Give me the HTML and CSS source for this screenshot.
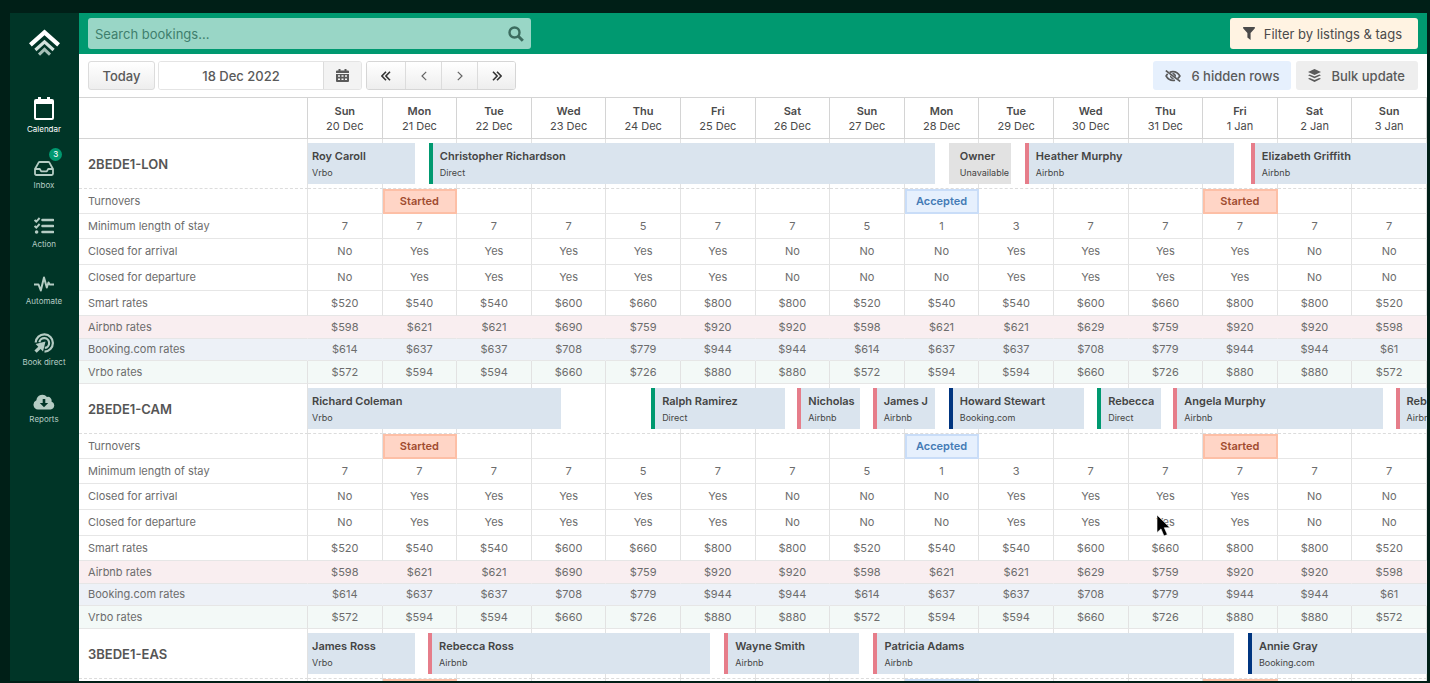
FILE: index.html
```html
<!DOCTYPE html>
<html lang="en">
<head>
    <meta charset="UTF-8">
    <meta name="viewport" content="width=device-width, initial-scale=1.0">
    <title>Calendar</title>
    <link rel="stylesheet" href="styles.css">
</head>
<body>
    <nav class="sidebar">
        <a href="#" class="logo" aria-label="Home">
            <svg width="31" height="27" viewBox="0 0 31 27" fill="none">
                <path d="M1.400 15.800 15.500 3.400l14.100 12.400" stroke="#fff" stroke-width="4.200"/>
                <path d="M6.400 21 15.500 12.800l9.100 8.200" stroke="#d3e2dd" stroke-width="3.200"/>
                <path d="M10 25.600 15.500 20.400l5.500 5.200" stroke="#a5beb6" stroke-width="3"/>
            </svg>
        </a>
        <a href="#" class="nav-item active">
            <svg width="20" height="23" viewBox="0 0 20 23"><path fill="currentColor" fill-rule="evenodd" d="M4 0h3v2h6V0h3v2h2a2 2 0 0 1 2 2v17a2 2 0 0 1-2 2H2a2 2 0 0 1-2-2V4a2 2 0 0 1 2-2h2zM2 7v14h16V7z"/></svg>
            <span>Calendar</span>
        </a>
        <a href="#" class="nav-item">
            <svg width="20" height="15" viewBox="0 0 20 15" fill="none" stroke="currentColor" stroke-width="1.8" stroke-linejoin="round"><path d="M1 8 4.600 1.600Q5 1 5.800 1h8.400q.8 0 1.200.6L19 8v4.600q0 1.400-1.400 1.400H2.400Q1 14 1 12.600z"/><path d="M1 8h4.800l1.400 2.400h5.600L14.200 8H19"/></svg>
            <span>Inbox</span>
            <b class="badge">3</b>
        </a>
        <a href="#" class="nav-item">
            <svg width="20" height="18" viewBox="0 0 20 18" fill="none" stroke="currentColor"><path stroke-width="2.600" stroke-linecap="round" d="M8.500 3H19M8.500 9H19M8.500 15H19"/><path stroke-width="1.900" d="m.6 3 1.700 1.700L5.600 1M.6 9l1.700 1.700L5.600 7"/><circle cx="2.600" cy="15" r="1.800" fill="currentColor" stroke="none"/></svg>
            <span>Action</span>
        </a>
        <a href="#" class="nav-item">
            <svg width="20" height="16" viewBox="0 0 20 16" fill="none" stroke="currentColor" stroke-width="2" stroke-linejoin="round"><path d="M0 8.500h4.500l2.300 6L10 1.500l2.800 10 1.700-5 1.200 2H20"/></svg>
            <span>Automate</span>
        </a>
        <a href="#" class="nav-item">
            <svg width="20" height="20" viewBox="0 0 20 20" fill="none" stroke="currentColor"><path stroke-width="2.200" d="M1.700 9.500A8.600 8.600 0 1 1 10.500 18.600"/><path stroke-width="2.200" d="M5.400 9.200a4.900 4.900 0 1 1 5.400 5.700"/><path fill="currentColor" stroke="none" d="m11.500 8.500-2.500 10-2.400-2.600L2.700 19.800.4 17.500l3.900-3.800L1.600 11z"/></svg>
            <span>Book direct</span>
        </a>
        <a href="#" class="nav-item">
            <svg width="22" height="16" viewBox="0 0 22 16"><path fill="currentColor" fill-rule="evenodd" d="M5 15.500A4.800 4.800 0 0 1 3.400 6.300 6 6 0 0 1 14 3a3.600 3.600 0 0 1 4.500 4.400A4.200 4.200 0 0 1 17.600 15.500zM9.700 5v4H6.800l4.200 4.300L15.200 9h-2.900V5z"/></svg>
            <span>Reports</span>
        </a>
    </nav>

    <main class="content">
        <header class="topbar">
            <form class="search">
                <input type="text" placeholder="Search bookings..." aria-label="Search bookings">
                <button type="button" aria-label="Search">
                    <svg width="16" height="16" viewBox="0 0 16 16" fill="none" stroke="currentColor" stroke-width="2.400"><circle cx="6.500" cy="6.500" r="5"/><path stroke-width="3" d="m10.300 10.300 4.500 4.500"/></svg>
                </button>
            </form>
            <button type="button" class="btn filter-btn">
                <svg width="12" height="13" viewBox="0 0 12 13"><path fill="currentColor" d="M.5 0h11q.8.600.2 1.400L7.600 6v7L4.400 10.400V6L.3 1.400Q-.3.600.5 0z"/></svg>
                Filter by listings &amp; tags
            </button>
        </header>

        <div class="toolbar">
            <button type="button" class="btn today-btn">Today</button>
            <div class="date-group">
                <input type="text" value="18 Dec 2022" aria-label="Date">
                <button type="button" class="grey-btn" aria-label="Open date picker">
                    <svg width="13" height="13" viewBox="0 0 13 13"><path fill="currentColor" fill-rule="evenodd" d="M2.500 0h2v1.500h4V0h2v1.500H12q1 0 1 1V4H0V2.500q0-1 1-1h1.500zM0 5h13v7q0 1-1 1H1q-1 0-1-1zm2 1.200v1.600h2V6.200zm3.500 0v1.600h2V6.200zm3.500 0v1.600h2V6.200zM2 9.500v1.600h2V9.500zm3.500 0v1.600h2V9.500zm3.500 0v1.600h2V9.500z"/></svg>
                </button>
            </div>
            <div class="step-group">
                <button type="button" class="grey-btn strong" aria-label="Back two weeks"><svg width="10" height="10" viewBox="0 0 10 10"><path d="M5 .8.9 5 5 9.200M9 .8 4.900 5 9 9.200"/></svg></button>
                <button type="button" class="grey-btn" aria-label="Back one day"><svg width="6" height="10" viewBox="0 0 6 10"><path d="M5.200.8 1 5l4.200 4.200"/></svg></button>
                <button type="button" class="grey-btn" aria-label="Forward one day"><svg width="6" height="10" viewBox="0 0 6 10"><path d="M.8.8 5 5 .8 9.200"/></svg></button>
                <button type="button" class="grey-btn strong" aria-label="Forward two weeks"><svg width="10" height="10" viewBox="0 0 10 10"><path d="M1 .8 5.100 5 1 9.200M5 .8 9.100 5 5 9.200"/></svg></button>
            </div>
            <button type="button" class="btn hidden-btn">
                <svg width="16" height="12" viewBox="0 0 16 12" fill="none" stroke="currentColor"><path stroke-width="1.600" d="M4.700 2.300A7.500 7.500 0 0 1 8 1.600c3 0 5.400 1.800 6.900 4.400a9 9 0 0 1-2.300 2.700M10 10.200a7 7 0 0 1-2 .2C5 10.400 2.600 8.600 1.100 6a9 9 0 0 1 1.600-2.100"/><path fill="currentColor" stroke="none" d="M7 3.300a3 3 0 0 1 3.800 4zM5 5.200l4 3.500A3 3 0 0 1 5 5.200z"/><path stroke-width="1.700" d="m.8.6 14.400 10.800"/></svg>
                6 hidden rows
            </button>
            <button type="button" class="btn bulk-btn">
                <svg width="13" height="13" viewBox="0 0 13 13" fill="currentColor"><path d="M6.500 0 13 3 6.500 6 0 3z"/><path d="m1.700 5.400 4.800 2.200 4.800-2.200L13 6.300 6.500 9.300 0 6.300z"/><path d="m1.700 8.900 4.800 2.200 4.800-2.200 1.700.9-6.500 3.100L0 9.800z"/></svg>
                Bulk update
            </button>
        </div>

        <table class="calendar">
            <thead>
                <tr id="days"><th class="label" aria-label="Listing"></th></tr>
            </thead>
            <tbody id="listings"></tbody>
        </table>
    </main>

    <svg class="pointer" width="15" height="23" viewBox="0 0 15 23"><path d="M1 1v17.500l4-3.600 3 7.100 3.300-1.400-3-6.900H14z" stroke="#fff" stroke-width=".6"/></svg>

    <script src="script.js"></script>
</body>
</html>
```
FILE: styles.css
```css
* {
    box-sizing: border-box;
}
body {
    display: flex; height: 100vh; margin: 0; padding: 13px 3px 2px 10px; overflow: hidden; background-color: #001f17; font-family: Inter, "Liberation Sans", sans-serif; font-size: 11px; color: #4a4a4a;
}
button, input {
    font: inherit; color: inherit; margin: 0;
}
button {
    cursor: pointer;
}
svg {
    display: block; flex: none;
}

/* Sidebar */
.sidebar {
    display: flex; flex-direction: column; align-items: center; gap: 27px; flex: none; width: 69px; padding: 16px 1px 0 0; background-color: #003527;
}
.logo {
    margin-bottom: 14px;
}
.nav-item {
    position: relative; display: flex; flex-direction: column; align-items: center; gap: 4px; color: #b5ccc4; font-size: 8px; line-height: 10px; text-decoration: none;
}
.nav-item.active {
    color: #fff;
}
.badge {
    position: absolute; top: -13px; right: -8px; width: 13px; height: 13px; border-radius: 50%; background-color: #009970; color: #fff; font-size: 8px; font-weight: 500; line-height: 13px; text-align: center;
}

/* Top bars */
.content {
    flex: 1; min-width: 0; overflow: hidden; background-color: #fff;
}
.topbar {
    display: flex; justify-content: space-between; align-items: center; height: 41px; padding: 0 9px; background-color: #009970; font-size: 13px;
}
.search {
    display: flex; align-items: center; width: 443px; height: 31px; border-radius: 3px; background-color: #99d6c6;
}
.search input {
    flex: 1; min-width: 0; padding: 0 7px; border: none; background: none; outline: none;
}
.search input::placeholder {
    color: #3f7f6d; opacity: 1;
}
.search button {
    padding: 0 7px; border: none; background: none; color: #3c6c5f;
}
.btn {
    display: flex; align-items: center; justify-content: center; height: 29px; border: none; border-radius: 3px; white-space: nowrap;
}
.filter-btn {
    gap: 9px; height: 31px; padding: 0 16px 0 13px; background-color: #fff3e2;
}
.toolbar {
    display: flex; align-items: center; height: 43px; padding: 0 9px; font-size: 13px; font-weight: 500; color: #5a5a5a;
}
.today-btn {
    width: 67px; margin-right: 3px; border: 1px solid #dcdcdc; background: linear-gradient(#fff, #eee);
}
.date-group, .step-group {
    display: flex; height: 29px; border: 1px solid #e4e4e4; border-radius: 3px; overflow: hidden;
}
.date-group {
    margin-right: 4px;
}
.date-group input {
    width: 164px; padding: 0; border: none; outline: none; background: #fff; text-align: center;
}
.grey-btn {
    display: flex; align-items: center; justify-content: center; width: 36px; padding: 0; border: none; border-left: 1px solid #dcdcdc; background: linear-gradient(#fff, #eee);
}
.date-group .grey-btn {
    width: 38px; background: #f3f3f3;
}
.step-group {
    border-color: #d6d6d6;
}
.step-group .grey-btn:first-child, .step-group .grey-btn:last-child {
    width: 38px;
}
.step-group .grey-btn:first-child {
    border-left: none;
}
.step-group path {
    fill: none; stroke: #666; stroke-width: 1.2;
}
.step-group .strong path {
    stroke: #333; stroke-width: 1.6;
}
.hidden-btn {
    gap: 10px; margin-left: auto; padding: 0 12px; background-color: #e6f0fd;
}
.bulk-btn {
    gap: 10px; margin-left: 5px; padding: 0 13px 0 12px; background-color: #eee;
}

/* Calendar */
.calendar {
    width: 100%; table-layout: fixed; border-collapse: separate; border-spacing: 0; border-top: 1px solid #d4d4d4;
}
.calendar th, .calendar td {
    height: 25px; padding: 0; border-right: 1px solid #e2e2e2; border-bottom: 1px solid #e6e6e6; line-height: 15px; text-align: center; font-weight: 400; color: #6c6c6c;
}
.calendar .label {
    width: 229px; padding-left: 9px; text-align: left;
}
.calendar thead th {
    height: 41px; padding-top: 2px; border-color: #d4d4d4; color: #4a4a4a;
}
.calendar thead b {
    display: block; font-weight: 600;
}
.calendar .listing th, .calendar .listing td {
    height: 50px; border-bottom: 1px dashed #dcdcdc;
}
.calendar .listing .label {
    padding-top: 2px; font-size: 13px; font-weight: 600; color: #555;
}
.calendar .listing td {
    position: relative;
}
.calendar .closed th, .calendar .closed td {
    height: 26px;
}
.calendar .airbnb-rates th, .calendar .airbnb-rates td {
    height: 23px; background-color: #f9eef0; border-right-color: #f9eef0;
}
.calendar .booking-rates th, .calendar .booking-rates td {
    height: 22px; background-color: #edf1f7; border-right-color: #edf1f7;
}
.calendar .vrbo-rates th, .calendar .vrbo-rates td {
    height: 23px; background-color: #f3f9f7;
}
.calendar .started {
    background-color: #ffd5c6; outline: 2px solid #fdbfa6; outline-offset: -2px; font-weight: 600; color: #a04c30;
}
.calendar .accepted {
    background-color: #e6f0fd; outline: 2px solid #c9ddf8; outline-offset: -2px; font-weight: 600; color: #447bb5;
}

/* Bookings lie over the day cells, the track is one day wide */
.track {
    position: absolute; z-index: 1; top: 4px; left: 0; right: -1px; height: 41px;
}
.booking {
    position: absolute; top: 0; height: 41px; padding: 5px 0 0 7px; border-left: 4px solid; background-color: #dae4ee; overflow: hidden; white-space: nowrap; text-align: left; color: #444;
}
.booking b {
    display: block; line-height: 16px; font-weight: 600;
}
.booking small {
    display: block; font-size: 9px; line-height: 17px;
}
.booking.vrbo {
    padding-left: 4px; border-left: none;
}
.booking.direct {
    border-color: #009970;
}
.booking.airbnb {
    border-color: #e67d8a;
}
.booking.bookingcom {
    border-color: #003580;
}
.booking.owner {
    border-color: #e2e2e2; background-color: #e2e2e2;
}
.pointer {
    position: absolute; left: 1156px; top: 514px; z-index: 2;
}
```
FILE: script.js
```javascript
const days = [
    'Sun 20 Dec', 'Mon 21 Dec', 'Tue 22 Dec', 'Wed 23 Dec', 'Thu 24 Dec',
    'Fri 25 Dec', 'Sat 26 Dec', 'Sun 27 Dec', 'Mon 28 Dec', 'Tue 29 Dec',
    'Wed 30 Dec', 'Thu 31 Dec', 'Fri 1 Jan', 'Sat 2 Jan', 'Sun 3 Jan'
];

const closed = 'No Yes Yes Yes Yes Yes No No No Yes Yes Yes Yes No No';

const rows = [
    ['Turnovers', 'turnovers', '- Started - - - - - - Accepted - - - Started - -'],
    ['Minimum length of stay', 'min-stay', '7 7 7 7 5 7 7 5 1 3 7 7 7 7 7'],
    ['Closed for arrival', 'closed', closed],
    ['Closed for departure', 'closed', closed],
    ['Smart rates', 'smart-rates', '$520 $540 $540 $600 $660 $800 $800 $520 $540 $540 $600 $660 $800 $800 $520'],
    ['Airbnb rates', 'airbnb-rates', '$598 $621 $621 $690 $759 $920 $920 $598 $621 $621 $629 $759 $920 $920 $598'],
    ['Booking.com rates', 'booking-rates', '$614 $637 $637 $708 $779 $944 $944 $614 $637 $637 $708 $779 $944 $944 $61'],
    ['Vrbo rates', 'vrbo-rates', '$572 $594 $594 $660 $726 $880 $880 $572 $594 $594 $660 $726 $880 $880 $572']
];

// guest, channel, css class, start and length in days
const listings = [
    { name: '2BEDE1-LON', rows: rows, bookings: [
        ['Roy Caroll', 'Vrbo', 'vrbo', 0, 1.43],
        ['Christopher Richardson', 'Direct', 'direct', 1.62, 6.79],
        ['Owner', 'Unavailable', 'owner', 8.59, 0.84],
        ['Heather Murphy', 'Airbnb', 'airbnb', 9.61, 2.8],
        ['Elizabeth Griffith', 'Airbnb', 'airbnb', 12.64, 2.36]
    ] },
    { name: '2BEDE1-CAM', rows: rows, bookings: [
        ['Richard Coleman', 'Vrbo', 'vrbo', 0, 3.39],
        ['Ralph Ramirez', 'Direct', 'direct', 4.6, 1.79],
        ['Nicholas', 'Airbnb', 'airbnb', 6.56, 0.84],
        ['James J', 'Airbnb', 'airbnb', 7.57, 0.84],
        ['Howard Stewart', 'Booking.com', 'bookingcom', 8.59, 1.81],
        ['Rebecca', 'Direct', 'direct', 10.58, 0.85],
        ['Angela Murphy', 'Airbnb', 'airbnb', 11.6, 2.81],
        ['Rebecca', 'Airbnb', 'airbnb', 14.58, 0.42]
    ] },
    { name: '3BEDE1-EAS', rows: rows.slice(0, 1), bookings: [
        ['James Ross', 'Vrbo', 'vrbo', 0, 1.43],
        ['Rebecca Ross', 'Airbnb', 'airbnb', 1.61, 3.78],
        ['Wayne Smith', 'Airbnb', 'airbnb', 5.58, 1.81],
        ['Patricia Adams', 'Airbnb', 'airbnb', 7.58, 4.84],
        ['Annie Gray', 'Booking.com', 'bookingcom', 12.6, 2.4]
    ] }
];

days.forEach(day => {
    const [weekday, ...date] = day.split(' ');
    document.getElementById('days').innerHTML += `<th scope="col"><b>${weekday}</b>${date.join(' ')}</th>`;
});

let html = '';
listings.forEach(listing => {
    const bars = listing.bookings.map(([guest, channel, type, start, length]) =>
        `<div class="booking ${type}" style="left: ${start * 100}%; width: ${length * 100}%"><b>${guest}</b><small>${channel}</small></div>`
    ).join('');
    html += `<tr class="listing"><th class="label" scope="row">${listing.name}</th><td><div class="track">${bars}</div></td>${'<td></td>'.repeat(days.length - 1)}</tr>`;

    listing.rows.forEach(([label, type, values]) => {
        const cells = values.split(' ').map(value => {
            if (value === '-') return '<td></td>';
            return type === 'turnovers' ? `<td class="${value.toLowerCase()}">${value}</td>` : `<td>${value}</td>`;
        }).join('');
        html += `<tr class="${type}"><th class="label" scope="row">${label}</th>${cells}</tr>`;
    });
});
document.getElementById('listings').innerHTML = html;
```
